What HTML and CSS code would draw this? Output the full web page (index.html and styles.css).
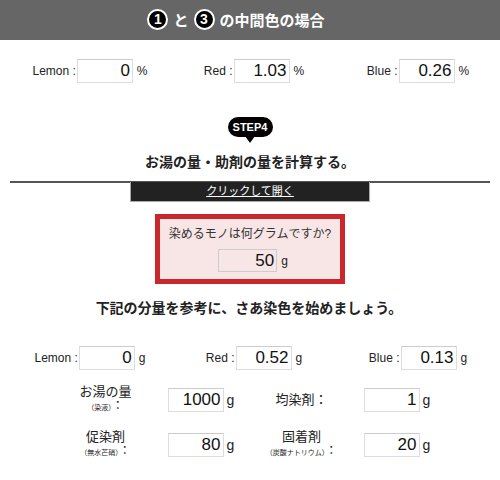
FILE: index.html
```html
<!DOCTYPE html>
<html lang="ja">
<head>
    <meta charset="UTF-8">
    <meta name="viewport" content="width=device-width, initial-scale=1.0">
    <title>中間色の場合</title>
    <link rel="stylesheet" href="styles.css">
</head>
<body>
    <header class="title-bar">
        <h2><span class="num">1</span>と<span class="num">3</span>の中間色の場合</h2>
    </header>

    <div class="ratio-row">
        <div class="field"><label>Lemon :</label><input type="text" value="0"><span class="unit">%</span></div>
        <div class="field"><label>Red :</label><input type="text" value="1.03"><span class="unit">%</span></div>
        <div class="field"><label>Blue :</label><input type="text" value="0.26"><span class="unit">%</span></div>
    </div>

    <section class="step">
        <div class="step-badge">STEP4</div>
        <h3>お湯の量・助剤の量を計算する。</h3>
    </section>

    <div class="toggle">
        <a href="#">クリックして開く</a>
    </div>

    <div class="weight-box">
        <p>染めるモノは何グラムですか?</p>
        <div class="weight-input"><input type="text" value="50"><span class="unit">g</span></div>
    </div>

    <h3 class="lead">下記の分量を参考に、さあ染色を始めましょう。</h3>

    <div class="ratio-row grams">
        <div class="field"><label>Lemon :</label><input type="text" value="0"><span class="unit">g</span></div>
        <div class="field"><label>Red :</label><input type="text" value="0.52"><span class="unit">g</span></div>
        <div class="field"><label>Blue :</label><input type="text" value="0.13"><span class="unit">g</span></div>
    </div>

    <div class="agent-grid">
        <div class="agent">
            <div class="agent-label">お湯の量<small><span>（染液）</span>：</small></div>
            <input type="text" value="1000"><span class="unit">g</span>
        </div>
        <div class="agent">
            <div class="agent-label">均染剤：</div>
            <input type="text" value="1"><span class="unit">g</span>
        </div>
        <div class="agent">
            <div class="agent-label">促染剤<small><span>（無水芒硝）</span>：</small></div>
            <input type="text" value="80"><span class="unit">g</span>
        </div>
        <div class="agent">
            <div class="agent-label">固着剤<small><span>（炭酸ナトリウム）</span>：</small></div>
            <input type="text" value="20"><span class="unit">g</span>
        </div>
    </div>
</body>
</html>
```

FILE: styles.css
```css
* {
    margin: 0;
    padding: 0;
    box-sizing: border-box;
}

body {
    font-family: "Liberation Sans", "Noto Sans CJK JP", sans-serif;
    background: #fff;
    color: #222;
    width: 500px;
    height: 480px;
    overflow: hidden;
}

.title-bar {
    height: 40px;
    background: #666;
    display: flex;
    justify-content: center;
    align-items: center;
}

.title-bar h2 {
    font-size: 15px;
    font-weight: bold;
    color: #fff;
    display: flex;
    align-items: center;
    margin-left: -28px;
    margin-top: -2px;
}

.num {
    width: 21px;
    height: 21px;
    border-radius: 50%;
    background: #000;
    border: 2px solid #fff;
    color: #fff;
    font-size: 14px;
    font-weight: bold;
    display: inline-flex;
    justify-content: center;
    align-items: center;
    margin: 0 5px;
}

.num:first-child {
    margin-left: 0;
}

.ratio-row {
    display: grid;
    grid-template-columns: repeat(3, 1fr);
    padding-left: 8px;
    margin-top: 19px;
}

.field {
    display: flex;
    justify-content: center;
    align-items: center;
    font-size: 12px;
    color: #222;
}

.field label {
    margin-right: 1px;
}

input {
    width: 56px;
    height: 24px;
    border: 1px solid #ddd;
    border-top-color: #ccc;
    background: #fff;
    font-family: "Liberation Sans", sans-serif;
    font-size: 17px;
    color: #111;
    text-align: right;
    padding: 0 2px;
    outline: none;
}

.unit {
    font-size: 12px;
    margin-left: 4px;
}

.step {
    margin-top: 34px;
    text-align: center;
}

.step-badge {
    position: relative;
    display: inline-block;
    width: 45px;
    height: 20px;
    line-height: 20px;
    border-radius: 10px;
    background: #000;
    color: #fff;
    font-size: 11px;
    font-weight: bold;
}

.step-badge::after {
    content: "";
    position: absolute;
    left: 50%;
    bottom: -6px;
    margin-left: -5px;
    border-left: 5px solid transparent;
    border-right: 5px solid transparent;
    border-top: 7px solid #000;
}

.step h3 {
    margin-top: 15px;
    font-size: 14px;
    font-weight: bold;
    line-height: 20px;
}

.toggle {
    margin: 9px 10px 0;
    border-top: 2px solid #555;
}

.toggle a {
    display: block;
    width: 240px;
    height: 20px;
    margin: -1px auto 0;
    background: #222;
    border: 1px solid #aaa;
    border-top: none;
    color: #fff;
    font-size: 11px;
    line-height: 19px;
    text-align: center;
}

.weight-box {
    width: 190px;
    height: 70px;
    margin: 12px auto 0;
    border: 5px solid #c9272b;
    background: #f8e6e6;
    text-align: center;
    padding-top: 7px;
}

.weight-box p {
    font-size: 12px;
    color: #333;
    line-height: 16px;
}

.weight-input {
    display: flex;
    justify-content: center;
    align-items: center;
    margin-top: 7px;
    margin-left: 6px;
}

.weight-input input {
    width: 59px;
    height: 23px;
    background: transparent;
    border-color: #ccc;
}

.lead {
    margin-top: 14px;
    text-align: center;
    font-size: 14px;
    font-weight: bold;
    line-height: 20px;
    margin-left: -2px;
}

.grams {
    margin-top: 28px;
}

.agent-grid {
    display: grid;
    grid-template-columns: 175px 175px;
    column-gap: 21px;
    row-gap: 14px;
    justify-content: center;
    margin-top: 14px;
    margin-left: -8px;
}

.agent {
    display: flex;
    align-items: center;
}

.agent-label {
    width: 90px;
    margin-right: 17px;
    text-align: center;
    font-size: 13px;
    line-height: 15px;
    color: #222;
}

.agent-label small {
    display: block;
    font-size: 12px;
    line-height: 14px;
}

.agent-label small span {
    font-size: 7px;
}

.agent .unit {
    font-size: 14px;
    margin-left: 3px;
}
```
